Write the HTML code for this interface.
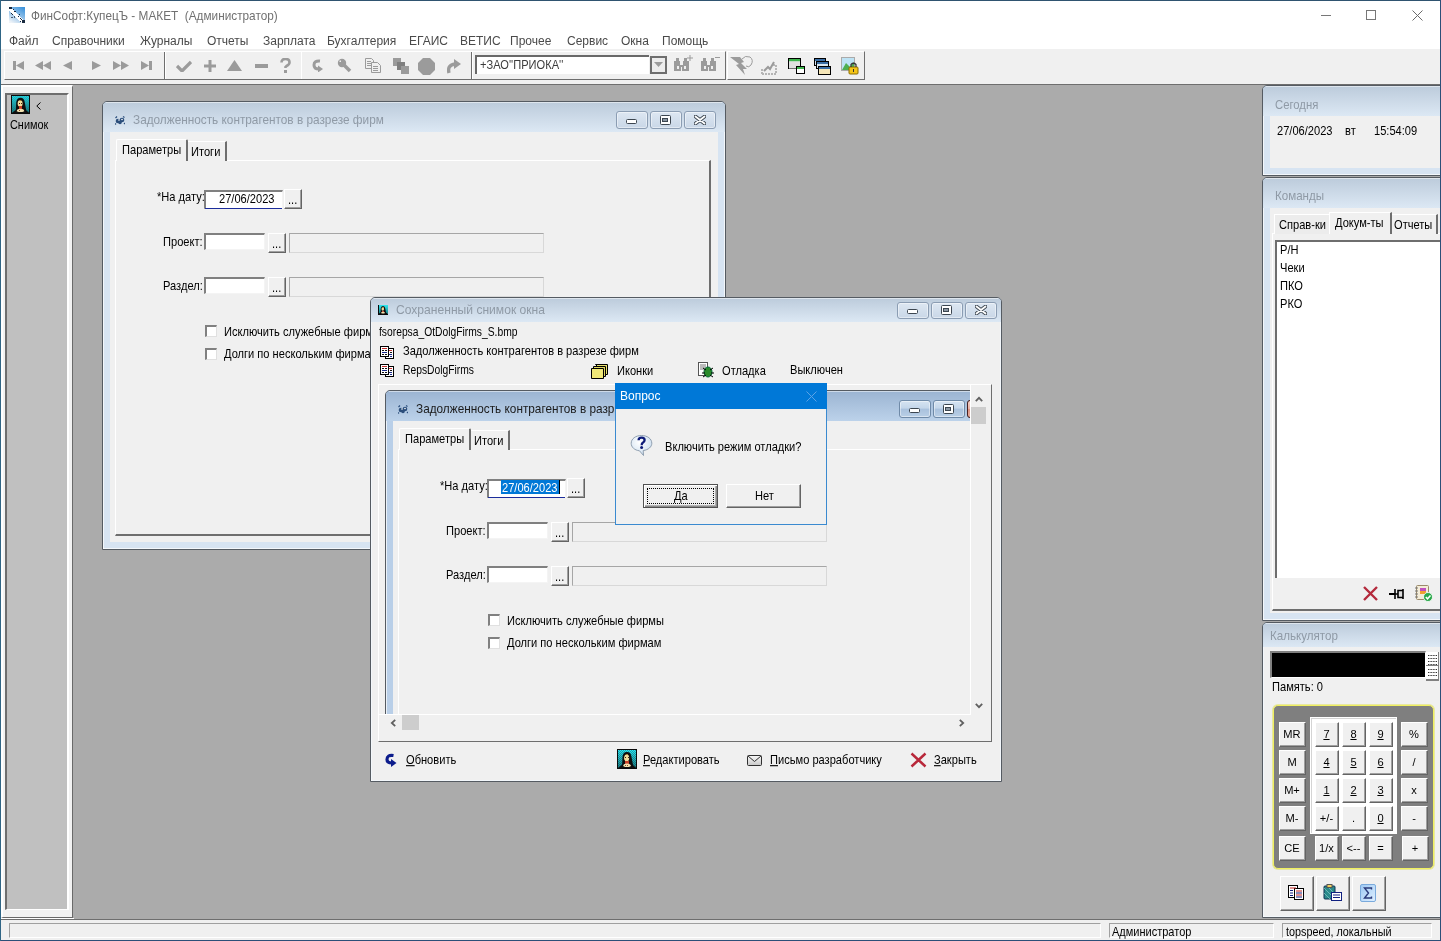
<!DOCTYPE html>
<html><head><meta charset="utf-8"><style>
html,body{margin:0;padding:0;}
body{width:1441px;height:941px;position:relative;overflow:hidden;background:#fff;font-family:"Liberation Sans", sans-serif;}
.t{position:absolute;white-space:pre;font-family:"Liberation Sans", sans-serif;will-change:transform;}
svg{display:block}
</style></head><body>
<div style="position:absolute;left:0px;top:0px;width:1441px;height:49px;background:#fff"></div><svg style="position:absolute;left:9px;top:7px;shape-rendering:crispEdges" width="16" height="16" viewBox="0 0 16 16"><defs><linearGradient id="ai" x1="0.8" y1="0" x2="0.2" y2="1"><stop offset="0" stop-color="#3f95dc"/><stop offset="0.55" stop-color="#9cc6ea"/><stop offset="1" stop-color="#eef3f8"/></linearGradient></defs>
    <rect x="0" y="0" width="16" height="16" fill="url(#ai)"/>
    <path d="M1 2 L14 15" stroke="#fff" stroke-width="3.6"/>
    <g fill="#1a2a40"><rect x="0" y="0" width="3" height="2"/><rect x="4" y="2" width="1" height="1"/><rect x="5" y="4" width="2" height="1"/><rect x="10" y="7" width="1" height="1"/><rect x="9" y="9" width="1" height="1"/><rect x="11" y="11" width="1" height="1"/><rect x="12" y="12" width="1" height="1"/><rect x="13" y="13" width="3" height="3"/><rect x="11" y="14" width="1" height="1"/><rect x="2" y="6" width="1" height="1"/><rect x="3" y="7" width="1" height="1"/><rect x="2" y="10" width="2" height="1" opacity="0.7"/><rect x="5" y="9" width="1" height="2" opacity="0.7"/></g></svg><div class="t" style="left:31px;top:11px;font-size:11.8px;line-height:11.8px;color:#707070;transform:scaleY(1.05);transform-origin:0 10px;">ФинСофт:КупецЪ - МАКЕТ  (Администратор)</div><div style="position:absolute;left:1321px;top:15px;width:10px;height:1px;background:#777"></div><div style="position:absolute;left:1366px;top:10px;width:10px;height:10px;border:1px solid #777;box-sizing:border-box"></div><svg style="position:absolute;left:1412px;top:10px;" width="11" height="11" viewBox="0 0 11 11"><path d="M0.5 0.5 L10.5 10.5 M10.5 0.5 L0.5 10.5" stroke="#6a6a6a" stroke-width="1"/></svg><div class="t" style="left:8.5px;top:35px;font-size:12px;line-height:12px;color:#4a4a4a;">Файл</div><div class="t" style="left:51.5px;top:35px;font-size:12px;line-height:12px;color:#4a4a4a;">Справочники</div><div class="t" style="left:140px;top:35px;font-size:12px;line-height:12px;color:#4a4a4a;">Журналы</div><div class="t" style="left:207.2px;top:35px;font-size:12px;line-height:12px;color:#4a4a4a;">Отчеты</div><div class="t" style="left:262.5px;top:35px;font-size:12px;line-height:12px;color:#4a4a4a;">Зарплата</div><div class="t" style="left:327px;top:35px;font-size:12px;line-height:12px;color:#4a4a4a;">Бухгалтерия</div><div class="t" style="left:409px;top:35px;font-size:12px;line-height:12px;color:#4a4a4a;">ЕГАИС</div><div class="t" style="left:460px;top:35px;font-size:12px;line-height:12px;color:#4a4a4a;">ВЕТИС</div><div class="t" style="left:510px;top:35px;font-size:12px;line-height:12px;color:#4a4a4a;">Прочее</div><div class="t" style="left:566.5px;top:35px;font-size:12px;line-height:12px;color:#4a4a4a;">Сервис</div><div class="t" style="left:620.5px;top:35px;font-size:12px;line-height:12px;color:#4a4a4a;">Окна</div><div class="t" style="left:662px;top:35px;font-size:12px;line-height:12px;color:#4a4a4a;">Помощь</div><div style="position:absolute;left:1px;top:49px;width:1439px;height:36px;background:#f0f0f0"></div><div style="position:absolute;left:4px;top:51px;width:722px;height:29px;border-top:1px solid #fff;border-left:1px solid #fff;border-right:1px solid #6e6e6e;border-bottom:1px solid #6e6e6e;box-sizing:border-box"></div><div style="position:absolute;left:164px;top:52px;width:1px;height:27px;background:#6e6e6e"></div><div style="position:absolute;left:165px;top:52px;width:1px;height:27px;background:#fff"></div><div style="position:absolute;left:301px;top:52px;width:1px;height:27px;background:#fff"></div><div style="position:absolute;left:471px;top:52px;width:1px;height:27px;background:#6e6e6e"></div><div style="position:absolute;left:472px;top:52px;width:1px;height:27px;background:#fff"></div><div style="position:absolute;left:727px;top:51px;width:138px;height:29px;border-top:1px solid #fff;border-left:1px solid #fff;border-right:1px solid #6e6e6e;border-bottom:1px solid #6e6e6e;box-sizing:border-box"></div><div style="position:absolute;left:1px;top:84px;width:1439px;height:1px;background:#6e6e6e"></div><svg style="position:absolute;left:13px;top:61px;" width="12" height="9" viewBox="0 0 12 9"><rect x="0" y="0" width="3" height="9" fill="#9b9b9b"/><path d="M11 0 L11 9 L3 4.5Z" fill="#9b9b9b"/></svg><svg style="position:absolute;left:35px;top:61px;" width="16" height="9" viewBox="0 0 16 9"><path d="M8 0 L8 9 L0 4.5Z M16 0 L16 9 L8 4.5Z" fill="#9b9b9b"/></svg><svg style="position:absolute;left:63px;top:61px;" width="10" height="9" viewBox="0 0 10 9"><path d="M9 0 L9 9 L0 4.5Z" fill="#9b9b9b"/></svg><svg style="position:absolute;left:91px;top:61px;" width="10" height="9" viewBox="0 0 10 9"><path d="M1 0 L1 9 L10 4.5Z" fill="#9b9b9b"/></svg><svg style="position:absolute;left:113px;top:61px;" width="16" height="9" viewBox="0 0 16 9"><path d="M0 0 L0 9 L8 4.5Z M8 0 L8 9 L16 4.5Z" fill="#9b9b9b"/></svg><svg style="position:absolute;left:141px;top:61px;" width="12" height="9" viewBox="0 0 12 9"><path d="M0 0 L0 9 L8 4.5Z" fill="#9b9b9b"/><rect x="8" y="0" width="3" height="9" fill="#9b9b9b"/></svg><svg style="position:absolute;left:176px;top:60px;" width="16" height="12" viewBox="0 0 16 12"><path d="M1 6 L6 11 L15 2" stroke="#9b9b9b" stroke-width="3.2" fill="none"/></svg><svg style="position:absolute;left:204px;top:60px;" width="12" height="12" viewBox="0 0 12 12"><rect x="4.5" y="0" width="3" height="12" fill="#9b9b9b"/><rect x="0" y="4.5" width="12" height="3" fill="#9b9b9b"/></svg><svg style="position:absolute;left:227px;top:60px;" width="15" height="11" viewBox="0 0 15 11"><path d="M7.5 0 L15 11 L0 11Z" fill="#9b9b9b"/></svg><svg style="position:absolute;left:255px;top:64px;" width="13" height="4" viewBox="0 0 13 4"><rect x="0" y="0" width="13" height="4" fill="#9b9b9b"/></svg><svg style="position:absolute;left:280px;top:58px;" width="11" height="15" viewBox="0 0 11 15"><path d="M1.5 4.5 Q1.5 1 5.5 1 Q9.5 1 9.5 4.5 Q9.5 6.5 6.5 8 L5.5 9 L5.5 10" stroke="#9b9b9b" stroke-width="2.6" fill="none"/><rect x="4" y="12" width="3" height="3" fill="#9b9b9b"/></svg><svg style="position:absolute;left:312px;top:59px;" width="13" height="13" viewBox="0 0 13 13"><path d="M8 2 Q2 1.5 2 6 Q2 10 7 10" stroke="#9b9b9b" stroke-width="3" fill="none"/><path d="M6 6.5 L11 10 L6 13.5Z" fill="#9b9b9b"/></svg><svg style="position:absolute;left:337px;top:58px;" width="15" height="15" viewBox="0 0 15 15"><circle cx="5" cy="5" r="4.2" fill="#9b9b9b"/><path d="M6 6 L13 13" stroke="#9b9b9b" stroke-width="3.5"/><rect x="2.5" y="2.5" width="1.5" height="1.5" fill="#f0f0f0"/></svg><svg style="position:absolute;left:365px;top:58px;" width="16" height="15" viewBox="0 0 16 15"><path d="M0.5 0.5 H6.5 L8.5 2.5 V10.5 H0.5Z" fill="#f0f0f0" stroke="#9b9b9b"/><path d="M6.5 4.5 H12.5 L15.5 7.5 V14.5 H6.5Z" fill="#f0f0f0" stroke="#9b9b9b"/><path d="M2 3.5H6 M2 5.5H6 M2 7.5H6 M8 8.5H13 M8 10.5H13 M8 12.5H13" stroke="#9b9b9b"/></svg><svg style="position:absolute;left:393px;top:58px;" width="16" height="16" viewBox="0 0 16 16"><rect x="0" y="0" width="8" height="8" fill="#9b9b9b"/><rect x="4" y="4" width="8" height="8" fill="#7f7f7f"/><rect x="8" y="8" width="8" height="8" fill="#9b9b9b"/></svg><svg style="position:absolute;left:418px;top:58px;" width="17" height="17" viewBox="0 0 17 17"><path d="M5 0 H12 L17 5 V12 L12 17 H5 L0 12 V5Z" fill="#9b9b9b"/></svg><svg style="position:absolute;left:447px;top:58px;" width="15" height="16" viewBox="0 0 15 16"><path d="M2 15 Q0 7 8 6" stroke="#9b9b9b" stroke-width="3.4" fill="none"/><path d="M7 1 L14 6 L7 11Z" fill="#9b9b9b"/></svg><div style="position:absolute;left:475px;top:55px;width:174px;height:19px;background:#fff;border-top:2px solid #696969;border-left:2px solid #696969;box-sizing:border-box"></div><div class="t" style="left:480px;top:60px;font-size:11.1px;line-height:11.1px;color:#3c3c3c;transform:scaleY(1.12);transform-origin:0 9px;">+ЗАО''ПРИОКА''</div><div style="position:absolute;left:650px;top:56px;width:17px;height:18px;background:#ececec;border:2px solid #6e6e6e;box-sizing:border-box"></div><svg style="position:absolute;left:654px;top:62px;" width="9" height="5" viewBox="0 0 9 5"><path d="M0 0 H9 L4.5 5Z" fill="#9b9b9b"/></svg><svg style="position:absolute;left:674px;top:58px;" width="19" height="14" viewBox="0 0 19 14"><path d="M2 0 H5 V3 H6 V7 H9 V3 H10 V0 H13 V3 H15 V13 H8 V9 H7 V13 H0 V3 H2Z" fill="#9b9b9b"/><rect x="3" y="8" width="2" height="3" fill="#f0f0f0"/><rect x="10" y="8" width="2" height="3" fill="#f0f0f0"/></svg><svg style="position:absolute;left:687px;top:55px;" width="6" height="6" viewBox="0 0 6 6"><path d="M3 0 V6 M0 3 H6" stroke="#9b9b9b"/></svg><svg style="position:absolute;left:701px;top:58px;" width="16" height="14" viewBox="0 0 16 14"><path d="M2 0 H5 V3 H6 V7 H9 V3 H10 V0 H13 V3 H15 V13 H8 V9 H7 V13 H0 V3 H2Z" fill="#9b9b9b"/><rect x="3" y="8" width="2" height="3" fill="#f0f0f0"/><rect x="10" y="8" width="2" height="3" fill="#f0f0f0"/></svg><div style="position:absolute;left:715px;top:57px;width:5px;height:1px;background:#9b9b9b"></div><svg style="position:absolute;left:730px;top:56px;" width="24" height="20" viewBox="0 0 24 20"><path d="M0 1 H10 L14 6 L11 7 L17 13 L13 13 L15 19 L6 9 L9 8Z" fill="#9b9b9b"/><path d="M12 3 Q15 -1 20 1 Q24 4 21 9 Q19 12 16 10" stroke="#9b9b9b" fill="none"/></svg><svg style="position:absolute;left:761px;top:59px;" width="16" height="16" viewBox="0 0 16 16"><path d="M1 15 H15 V6 H12 M1 15 V9" stroke="#b5b5b5" stroke-width="2" fill="none" stroke-dasharray="2 1"/><path d="M3 12 L7 8 L9 10 L13 3" stroke="#9b9b9b" stroke-width="2" fill="none"/></svg><svg style="position:absolute;left:788px;top:58px;" width="17" height="16" viewBox="0 0 17 16"><rect x="0.5" y="0.5" width="12" height="10" fill="#fff" stroke="#000"/><rect x="1" y="1" width="11" height="2.5" fill="#3cb44b"/><rect x="1" y="3.5" width="11" height="7" fill="#e0e0e0"/><rect x="8.5" y="8.5" width="8" height="7" fill="#fff" stroke="#000"/><rect x="9" y="9" width="7" height="2" fill="#3cb44b"/></svg><svg style="position:absolute;left:814px;top:58px;" width="17" height="17" viewBox="0 0 17 17"><rect x="0.5" y="0.5" width="11" height="7" fill="#cfe0ef" stroke="#000"/><rect x="1" y="1" width="10" height="2" fill="#3a6ea5"/><rect x="2.5" y="3.5" width="12" height="7" fill="#d8e6f0" stroke="#000"/><rect x="3" y="4" width="11" height="2" fill="#3a6ea5"/><rect x="4.5" y="8.5" width="12" height="8" fill="#f5e6b8" stroke="#000"/><rect x="5" y="9" width="11" height="2" fill="#3a6ea5"/></svg><svg style="position:absolute;left:841px;top:57px;" width="18" height="18" viewBox="0 0 18 18"><rect x="0.5" y="0.5" width="13" height="13" fill="#bde3f5" stroke="#aaa"/><path d="M1 13 L5 6 L9 10 L13 5 V13Z" fill="#4caf50"/><rect x="8" y="10" width="9" height="7" rx="1" fill="#f5c518" stroke="#8a6d00"/><path d="M10 10 V7.5 Q12.5 5 15 7.5 V10" stroke="#333" fill="none" stroke-width="1.2"/><rect x="12" y="12" width="1" height="3" fill="#333"/></svg><div style="position:absolute;left:1px;top:85px;width:1439px;height:834px;background:#ababab"></div><div style="position:absolute;left:1px;top:919px;width:1439px;height:1px;background:#6e6e6e"></div><div style="position:absolute;left:1px;top:920px;width:1439px;height:20px;background:#f0f0f0"></div><div style="position:absolute;left:9px;top:923px;width:1092px;height:15px;border-top:1px solid #a0a0a0;border-left:1px solid #a0a0a0;border-right:1px solid #fff;border-bottom:1px solid #fff;box-sizing:border-box"></div><div style="position:absolute;left:1109px;top:923px;width:165px;height:15px;border-top:1px solid #a0a0a0;border-left:1px solid #a0a0a0;border-right:1px solid #fff;border-bottom:1px solid #fff;box-sizing:border-box"></div><div style="position:absolute;left:1282px;top:923px;width:150px;height:15px;border-top:1px solid #a0a0a0;border-left:1px solid #a0a0a0;border-right:1px solid #fff;border-bottom:1px solid #fff;box-sizing:border-box"></div><div class="t" style="left:1112px;top:927px;font-size:11px;line-height:11px;color:#000;transform:scaleY(1.12);transform-origin:0 9px;">Администратор</div><div class="t" style="left:1286px;top:927px;font-size:10.8px;line-height:10.8px;color:#000;transform:scaleY(1.15);transform-origin:0 9px;">topspeed, локальный</div><div style="position:absolute;left:1px;top:85px;width:72px;height:833px;background:#f2f2f2;border-top:2px solid #fff;border-left:2px solid #fff;border-right:1px solid #696969;border-bottom:1px solid #696969;box-sizing:border-box"></div><div style="position:absolute;left:1px;top:918px;width:73px;height:1px;background:#fff"></div><div style="position:absolute;left:5px;top:93px;width:64px;height:817px;background:#c0c0c0;border-top:2px solid #6e6e6e;border-left:2px solid #6e6e6e;border-right:2px solid #fff;border-bottom:1px solid #fff;box-sizing:border-box"></div><svg style="position:absolute;left:11px;top:95px" width="19" height="19" viewBox="0 0 20 20" shape-rendering="crispEdges">
<defs><pattern id="chk1" width="2" height="2" patternUnits="userSpaceOnUse"><rect width="2" height="2" fill="#1aa8b8"/><rect width="1" height="1" fill="#30e8f0"/><rect x="1" y="1" width="1" height="1" fill="#30e8f0"/></pattern>
<linearGradient id="chk1g" x1="0" y1="0" x2="0" y2="1"><stop offset="0" stop-color="#000" stop-opacity="0"/><stop offset="1" stop-color="#000" stop-opacity="0.45"/></linearGradient></defs>
<rect x="0" y="0" width="20" height="20" fill="#0a0a0a"/>
<rect x="1" y="1" width="18" height="18" fill="url(#chk1)"/>
<rect x="1" y="1" width="18" height="18" fill="url(#chk1g)"/>
<path d="M5 19 L5.5 8 Q6 3 10 3 Q14 3 14.5 8 L16 16 L19 19Z" fill="#0e0e0e" shape-rendering="auto"/>
<path d="M1 19 L6 15 L14 15 L19 19Z" fill="#0e0e0e" shape-rendering="auto"/>
<ellipse cx="9.6" cy="9" rx="2.6" ry="3.4" fill="#f2dc9a" shape-rendering="auto"/>
<rect x="8" y="8" width="1" height="1" fill="#402010"/><rect x="11" y="8" width="1" height="1" fill="#402010"/>
<rect x="9" y="5" width="2" height="1" fill="#b08030"/>
<rect x="8" y="12" width="4" height="3" fill="#c84028"/>
<path d="M6 17 Q6.5 14.5 10 14.5 Q13.5 14.5 14 17 L12 18 L8 18Z" fill="#f2e2b0" shape-rendering="auto"/>
<rect x="8" y="16" width="1" height="1" fill="#8a5020"/><rect x="10" y="16" width="1" height="1" fill="#8a5020"/>
</svg><svg style="position:absolute;left:36px;top:102px;" width="5" height="8" viewBox="0 0 5 8"><path d="M4.5 0.5 L0.8 4 L4.5 7.5" stroke="#000" fill="none"/></svg><div class="t" style="left:10px;top:120px;font-size:10.9px;line-height:10.9px;color:#000;transform:scaleY(1.12);transform-origin:0 9px;">Снимок</div><div style="position:absolute;left:102px;top:101px;width:624px;height:449px;background:#d7e4f2;border:1px solid #555b62;border-radius:5px 5px 0 0;box-sizing:border-box;overflow:hidden"></div><div style="position:absolute;left:103px;top:102px;width:622px;height:30px;background:linear-gradient(#bccbdb,#dce8f4);border-radius:4px 4px 0 0"></div><div style="position:absolute;left:103px;top:132px;width:1px;height:417px;background:rgba(255,255,255,0.7)"></div><div style="position:absolute;left:724px;top:132px;width:1px;height:417px;background:rgba(255,255,255,0.7)"></div><div style="position:absolute;left:103px;top:548px;width:622px;height:1px;background:rgba(255,255,255,0.7)"></div><div style="position:absolute;left:106px;top:102px;width:616px;height:1px;background:rgba(255,255,255,0.5)"></div><div style="position:absolute;left:110px;top:132px;width:608px;height:410px;background:#f0f0f0"></div><svg style="position:absolute;left:115px;top:116px;" width="10" height="9" viewBox="0 0 10 9"><g fill="#2c4f7c"><circle cx="3" cy="5" r="2.3"/><circle cx="7" cy="4" r="2.3"/><circle cx="5" cy="6.5" r="1.8"/><path d="M0.5 2 L2 0.5 M8 0.5 L9.5 1.5 M9 8 L10 7 M1 8.5 L0 7.5" stroke="#2c4f7c" stroke-width="1.2"/></g><circle cx="4" cy="4" r="0.8" fill="#fff"/><circle cx="7" cy="3.5" r="0.8" fill="#fff"/></svg><div class="t" style="left:133px;top:115px;font-size:11.8px;line-height:11.8px;color:#8f9aa6;transform:scaleY(1.1);transform-origin:0 10px;">Задолженность контрагентов в разрезе фирм</div><div style="position:absolute;left:616px;top:111px;width:32px;height:18px;background:linear-gradient(#dde7f2,#c9d7e7);border:1px solid #8b9db3;border-radius:3px;box-sizing:border-box;box-shadow:inset 0 0 0 1px rgba(255,255,255,0.45)"></div><div style="position:absolute;left:626px;top:119px;width:11px;height:5px;background:#fff;border:1px solid #3c4650;border-radius:1.5px;box-sizing:border-box"></div><div style="position:absolute;left:650px;top:111px;width:32px;height:18px;background:linear-gradient(#dde7f2,#c9d7e7);border:1px solid #8b9db3;border-radius:3px;box-sizing:border-box;box-shadow:inset 0 0 0 1px rgba(255,255,255,0.45)"></div><div style="position:absolute;left:660px;top:115px;width:11px;height:10px;background:#fff;border:1px solid #3c4650;border-radius:1.5px;box-sizing:border-box"></div><div style="position:absolute;left:662px;top:118px;width:6px;height:4px;background:#8a96a2;border:1px solid #3c4650;box-sizing:border-box"></div><div style="position:absolute;left:684px;top:111px;width:32px;height:18px;background:linear-gradient(#dde7f2,#c9d7e7);border:1px solid #8b9db3;border-radius:3px;box-sizing:border-box;box-shadow:inset 0 0 0 1px rgba(255,255,255,0.45)"></div><svg style="position:absolute;left:694px;top:115px;" width="12" height="10" viewBox="0 0 12 10"><path d="M1.5 1.5 L10.5 8.5 M10.5 1.5 L1.5 8.5" stroke="#3c4650" stroke-width="3.6" stroke-linecap="round"/><path d="M1.5 1.5 L10.5 8.5 M10.5 1.5 L1.5 8.5" stroke="#fff" stroke-width="1.8" stroke-linecap="round"/></svg><div style="position:absolute;left:115px;top:160px;width:596px;height:376px;border-top:1px solid #fff;border-left:1px solid #fff;border-right:2px solid #6e6e6e;border-bottom:2px solid #6e6e6e;box-sizing:border-box"></div><div style="position:absolute;left:116px;top:139px;width:72px;height:22px;background:#f0f0f0;border-top:1px solid #fff;border-left:1px solid #fff;border-right:2px solid #6e6e6e;box-sizing:border-box;border-radius:2px 2px 0 0"></div><div style="position:absolute;left:188px;top:141px;width:39px;height:20px;background:#f0f0f0;border-top:1px solid #fff;border-right:2px solid #6e6e6e;box-sizing:border-box"></div><div class="t" style="left:122px;top:145px;font-size:11.1px;line-height:11.1px;color:#000;transform:scaleY(1.12);transform-origin:0 9px;">Параметры</div><div class="t" style="left:190.5px;top:147px;font-size:11.1px;line-height:11.1px;color:#000;transform:scaleY(1.12);transform-origin:0 9px;">Итоги</div><div class="t" style="left:157px;top:192px;font-size:11.1px;line-height:11.1px;color:#000;transform:scaleY(1.12);transform-origin:0 9px;">*На дату:</div><div class="t" style="left:162.5px;top:237px;font-size:11.1px;line-height:11.1px;color:#000;transform:scaleY(1.12);transform-origin:0 9px;">Проект:</div><div class="t" style="left:162.5px;top:281px;font-size:11.1px;line-height:11.1px;color:#000;transform:scaleY(1.12);transform-origin:0 9px;">Раздел:</div><div style="position:absolute;left:204px;top:190px;width:79px;height:19px;background:#fff;border-top:2px solid #808080;border-left:2px solid #808080;border-right:1px solid #f4f4f4;border-bottom:1px solid #f4f4f4;box-sizing:border-box"></div><div style="position:absolute;left:205px;top:208px;width:77px;height:1px;background:#1c2d9c"></div><div class="t" style="left:219px;top:194px;font-size:11.1px;line-height:11.1px;color:#000;transform:scaleY(1.12);transform-origin:0 9px;">27/06/2023</div><div style="position:absolute;left:284px;top:189px;width:18px;height:20px;background:#f0f0f0;border-top:1px solid #fff;border-left:1px solid #fff;border-right:1px solid #646464;border-bottom:1px solid #646464;box-sizing:border-box;box-shadow:inset -1px -1px 0 #a0a0a0"></div><div class="t" style="left:288px;top:195px;font-size:11.1px;line-height:11.1px;color:#000;transform:scaleY(1.12);transform-origin:0 9px;">...</div><div style="position:absolute;left:204px;top:233px;width:61px;height:17px;background:#fff;border-top:2px solid #808080;border-left:2px solid #808080;border-right:1px solid #f4f4f4;border-bottom:1px solid #f4f4f4;box-sizing:border-box"></div><div style="position:absolute;left:268px;top:233px;width:18px;height:20px;background:#f0f0f0;border-top:1px solid #fff;border-left:1px solid #fff;border-right:1px solid #646464;border-bottom:1px solid #646464;box-sizing:border-box;box-shadow:inset -1px -1px 0 #a0a0a0"></div><div class="t" style="left:272px;top:239px;font-size:11.1px;line-height:11.1px;color:#000;transform:scaleY(1.12);transform-origin:0 9px;">...</div><div style="position:absolute;left:289px;top:233px;width:255px;height:20px;border:1px solid #a6a6a6;border-right-color:#d8d8d8;border-bottom-color:#d8d8d8;box-sizing:border-box"></div><div style="position:absolute;left:204px;top:277px;width:61px;height:17px;background:#fff;border-top:2px solid #808080;border-left:2px solid #808080;border-right:1px solid #f4f4f4;border-bottom:1px solid #f4f4f4;box-sizing:border-box"></div><div style="position:absolute;left:268px;top:277px;width:18px;height:20px;background:#f0f0f0;border-top:1px solid #fff;border-left:1px solid #fff;border-right:1px solid #646464;border-bottom:1px solid #646464;box-sizing:border-box;box-shadow:inset -1px -1px 0 #a0a0a0"></div><div class="t" style="left:272px;top:283px;font-size:11.1px;line-height:11.1px;color:#000;transform:scaleY(1.12);transform-origin:0 9px;">...</div><div style="position:absolute;left:289px;top:277px;width:255px;height:20px;border:1px solid #a6a6a6;border-right-color:#d8d8d8;border-bottom-color:#d8d8d8;box-sizing:border-box"></div><div style="position:absolute;left:205px;top:325px;width:12px;height:12px;background:#fff;border-top:2px solid #808080;border-left:2px solid #808080;border-right:1px solid #e0e0e0;border-bottom:1px solid #e0e0e0;box-sizing:border-box"></div><div class="t" style="left:223.5px;top:327px;font-size:11.1px;line-height:11.1px;color:#000;transform:scaleY(1.12);transform-origin:0 9px;">Исключить служебные фирмы</div><div style="position:absolute;left:205px;top:348px;width:12px;height:12px;background:#fff;border-top:2px solid #808080;border-left:2px solid #808080;border-right:1px solid #e0e0e0;border-bottom:1px solid #e0e0e0;box-sizing:border-box"></div><div class="t" style="left:223.5px;top:349px;font-size:11.1px;line-height:11.1px;color:#000;transform:scaleY(1.12);transform-origin:0 9px;">Долги по нескольким фирмам</div><div style="position:absolute;left:370px;top:297px;width:632px;height:485px;background:#d7e4f2;border:1px solid #555b62;border-radius:5px 5px 0 0;box-sizing:border-box;overflow:hidden"></div><div style="position:absolute;left:371px;top:298px;width:630px;height:24px;background:linear-gradient(#bccbdb,#dce8f4);border-radius:4px 4px 0 0"></div><div style="position:absolute;left:371px;top:322px;width:1px;height:459px;background:rgba(255,255,255,0.7)"></div><div style="position:absolute;left:1000px;top:322px;width:1px;height:459px;background:rgba(255,255,255,0.7)"></div><div style="position:absolute;left:371px;top:780px;width:630px;height:1px;background:rgba(255,255,255,0.7)"></div><div style="position:absolute;left:374px;top:298px;width:624px;height:1px;background:rgba(255,255,255,0.5)"></div><div style="position:absolute;left:372px;top:322px;width:628px;height:458px;background:#f0f0f0"></div><div class="t" style="left:396px;top:304px;font-size:12.1px;line-height:12.1px;color:#8f9aa6;transform:scaleY(1.1);transform-origin:0 10px;">Сохраненный снимок окна</div><div style="position:absolute;left:897px;top:302px;width:32px;height:17px;background:linear-gradient(#dde7f2,#c9d7e7);border:1px solid #8b9db3;border-radius:3px;box-sizing:border-box;box-shadow:inset 0 0 0 1px rgba(255,255,255,0.45)"></div><div style="position:absolute;left:907px;top:309px;width:11px;height:5px;background:#fff;border:1px solid #3c4650;border-radius:1.5px;box-sizing:border-box"></div><div style="position:absolute;left:931px;top:302px;width:32px;height:17px;background:linear-gradient(#dde7f2,#c9d7e7);border:1px solid #8b9db3;border-radius:3px;box-sizing:border-box;box-shadow:inset 0 0 0 1px rgba(255,255,255,0.45)"></div><div style="position:absolute;left:941px;top:305px;width:11px;height:10px;background:#fff;border:1px solid #3c4650;border-radius:1.5px;box-sizing:border-box"></div><div style="position:absolute;left:943px;top:308px;width:6px;height:4px;background:#8a96a2;border:1px solid #3c4650;box-sizing:border-box"></div><div style="position:absolute;left:965px;top:302px;width:32px;height:17px;background:linear-gradient(#dde7f2,#c9d7e7);border:1px solid #8b9db3;border-radius:3px;box-sizing:border-box;box-shadow:inset 0 0 0 1px rgba(255,255,255,0.45)"></div><svg style="position:absolute;left:975px;top:305px;" width="12" height="10" viewBox="0 0 12 10"><path d="M1.5 1.5 L10.5 8.5 M10.5 1.5 L1.5 8.5" stroke="#3c4650" stroke-width="3.6" stroke-linecap="round"/><path d="M1.5 1.5 L10.5 8.5 M10.5 1.5 L1.5 8.5" stroke="#fff" stroke-width="1.8" stroke-linecap="round"/></svg><svg style="position:absolute;left:378px;top:304px" width="10" height="11" viewBox="0 0 20 20" shape-rendering="crispEdges">
<defs><pattern id="chk2" width="2" height="2" patternUnits="userSpaceOnUse"><rect width="2" height="2" fill="#1aa8b8"/><rect width="1" height="1" fill="#30e8f0"/><rect x="1" y="1" width="1" height="1" fill="#30e8f0"/></pattern>
<linearGradient id="chk2g" x1="0" y1="0" x2="0" y2="1"><stop offset="0" stop-color="#000" stop-opacity="0"/><stop offset="1" stop-color="#000" stop-opacity="0.45"/></linearGradient></defs>
<rect x="0" y="0" width="20" height="20" fill="#0a0a0a"/>
<rect x="1" y="1" width="18" height="18" fill="url(#chk2)"/>
<rect x="1" y="1" width="18" height="18" fill="url(#chk2g)"/>
<path d="M5 19 L5.5 8 Q6 3 10 3 Q14 3 14.5 8 L16 16 L19 19Z" fill="#0e0e0e" shape-rendering="auto"/>
<path d="M1 19 L6 15 L14 15 L19 19Z" fill="#0e0e0e" shape-rendering="auto"/>
<ellipse cx="9.6" cy="9" rx="2.6" ry="3.4" fill="#f2dc9a" shape-rendering="auto"/>
<rect x="8" y="8" width="1" height="1" fill="#402010"/><rect x="11" y="8" width="1" height="1" fill="#402010"/>
<rect x="9" y="5" width="2" height="1" fill="#b08030"/>
<rect x="8" y="12" width="4" height="3" fill="#c84028"/>
<path d="M6 17 Q6.5 14.5 10 14.5 Q13.5 14.5 14 17 L12 18 L8 18Z" fill="#f2e2b0" shape-rendering="auto"/>
<rect x="8" y="16" width="1" height="1" fill="#8a5020"/><rect x="10" y="16" width="1" height="1" fill="#8a5020"/>
</svg><div class="t" style="left:379px;top:328px;font-size:10.3px;line-height:10.3px;color:#000;transform:scaleY(1.2);transform-origin:0 8px;">fsorepsa_OtDolgFirms_S.bmp</div><svg style="position:absolute;left:380px;top:346px;" width="14" height="13" viewBox="0 0 14 13"><g shape-rendering="crispEdges"><rect x="5.5" y="2.5" width="8" height="10" fill="#fff" stroke="#000"/><path d="M9 4.5H12" stroke="#c83030"/><path d="M10 6.5H12" stroke="#101010"/><path d="M9 8.5H12" stroke="#1a2a8a"/><path d="M10 10.5H12" stroke="#1a2a8a"/><rect x="0.5" y="0.5" width="8" height="10" fill="#fff" stroke="#000"/><path d="M2 2.5H7" stroke="#c83030"/><path d="M2 4.5H3.5 M5 4.5H7" stroke="#101010"/><path d="M2 6.5H7" stroke="#1a2a8a"/><path d="M2 8.5H3.5 M5 8.5H7" stroke="#101010"/></g></svg><div class="t" style="left:403px;top:346px;font-size:11.1px;line-height:11.1px;color:#000;transform:scaleY(1.12);transform-origin:0 9px;">Задолженность контрагентов в разрезе фирм</div><svg style="position:absolute;left:380px;top:364px;" width="14" height="13" viewBox="0 0 14 13"><g shape-rendering="crispEdges"><rect x="5.5" y="2.5" width="8" height="10" fill="#fff" stroke="#000"/><path d="M9 4.5H12" stroke="#c83030"/><path d="M10 6.5H12" stroke="#101010"/><path d="M9 8.5H12" stroke="#1a2a8a"/><path d="M10 10.5H12" stroke="#1a2a8a"/><rect x="0.5" y="0.5" width="8" height="10" fill="#fff" stroke="#000"/><path d="M2 2.5H7" stroke="#c83030"/><path d="M2 4.5H3.5 M5 4.5H7" stroke="#101010"/><path d="M2 6.5H7" stroke="#1a2a8a"/><path d="M2 8.5H3.5 M5 8.5H7" stroke="#101010"/></g></svg><div class="t" style="left:403px;top:366px;font-size:10.3px;line-height:10.3px;color:#000;transform:scaleY(1.2);transform-origin:0 8px;">RepsDolgFirms</div><svg style="position:absolute;left:591px;top:364px;" width="18" height="15" viewBox="0 0 18 15"><path d="M4.5 0.5 H16.5 V10.5 H14.5Z" fill="#e8e070" stroke="#000"/><path d="M2.5 2.5 H14.5 V12.5 H2.5Z" fill="#e0d860" stroke="#000"/><path d="M0.5 4.5 H12.5 V14.5 H0.5Z" fill="#f0e878" stroke="#000"/></svg><div class="t" style="left:616.5px;top:366px;font-size:11.1px;line-height:11.1px;color:#000;transform:scaleY(1.12);transform-origin:0 9px;">Иконки</div><svg style="position:absolute;left:698px;top:362px;" width="18" height="16" viewBox="0 0 18 16"><rect x="0.5" y="0.5" width="9" height="13" fill="#fff" stroke="#555"/><path d="M2 3H8 M2 5H8 M2 7H6" stroke="#777"/><ellipse cx="10" cy="10" rx="4" ry="5" fill="#2a8a2a" stroke="#063"/><path d="M5 6 L8 8 M15 6 L12 8 M4 11 H7 M13 11 H16 M5 15 L8 13 M15 15 L12 13" stroke="#000"/></svg><div class="t" style="left:721.5px;top:366px;font-size:11.1px;line-height:11.1px;color:#000;transform:scaleY(1.12);transform-origin:0 9px;">Отладка</div><div class="t" style="left:789.5px;top:365px;font-size:11.1px;line-height:11.1px;color:#000;transform:scaleY(1.12);transform-origin:0 9px;">Выключен</div><div style="position:absolute;left:378px;top:384px;width:614px;height:358px;border-top:1px solid #fff;border-left:1px solid #fff;border-right:1px solid #6e6e6e;border-bottom:1px solid #6e6e6e;box-sizing:border-box"></div><svg style="position:absolute;left:975px;top:396px;" width="8" height="6" viewBox="0 0 8 6"><path d="M0.8 5.2 L4 1.8 L7.2 5.2" stroke="#606060" stroke-width="1.8" fill="none"/></svg><div style="position:absolute;left:971px;top:407px;width:15px;height:17px;background:#cdcdcd"></div><svg style="position:absolute;left:975px;top:703px;" width="8" height="6" viewBox="0 0 8 6"><path d="M0.8 0.8 L4 4.2 L7.2 0.8" stroke="#606060" stroke-width="1.8" fill="none"/></svg><svg style="position:absolute;left:390px;top:719px;" width="6" height="8" viewBox="0 0 6 8"><path d="M5.2 0.8 L1.8 4 L5.2 7.2" stroke="#606060" stroke-width="1.8" fill="none"/></svg><div style="position:absolute;left:402px;top:715px;width:17px;height:15px;background:#cdcdcd"></div><svg style="position:absolute;left:959px;top:719px;" width="6" height="8" viewBox="0 0 6 8"><path d="M0.8 0.8 L4.2 4 L0.8 7.2" stroke="#606060" stroke-width="1.8" fill="none"/></svg><div style="position:absolute;left:379px;top:385px;width:591px;height:329px;overflow:hidden;border-right:1px solid #fff;border-bottom:1px solid #fff"><div style="position:absolute;left:6px;top:5px;width:624px;height:449px;background:#b9cfe8;border:1px solid #555b62;border-radius:5px 5px 0 0;box-sizing:border-box;overflow:hidden"></div><div style="position:absolute;left:7px;top:6px;width:622px;height:30px;background:linear-gradient(#9bb4d2,#bcd2ea);border-radius:4px 4px 0 0"></div><div style="position:absolute;left:7px;top:36px;width:1px;height:417px;background:rgba(255,255,255,0.7)"></div><div style="position:absolute;left:628px;top:36px;width:1px;height:417px;background:rgba(255,255,255,0.7)"></div><div style="position:absolute;left:7px;top:452px;width:622px;height:1px;background:rgba(255,255,255,0.7)"></div><div style="position:absolute;left:10px;top:6px;width:616px;height:1px;background:rgba(255,255,255,0.5)"></div><div style="position:absolute;left:14px;top:36px;width:608px;height:410px;background:#f0f0f0"></div><svg style="position:absolute;left:19px;top:20px;" width="10" height="9" viewBox="0 0 10 9"><g fill="#2c4f7c"><circle cx="3" cy="5" r="2.3"/><circle cx="7" cy="4" r="2.3"/><circle cx="5" cy="6.5" r="1.8"/><path d="M0.5 2 L2 0.5 M8 0.5 L9.5 1.5 M9 8 L10 7 M1 8.5 L0 7.5" stroke="#2c4f7c" stroke-width="1.2"/></g><circle cx="4" cy="4" r="0.8" fill="#fff"/><circle cx="7" cy="3.5" r="0.8" fill="#fff"/></svg><div class="t" style="left:37px;top:19px;font-size:11.8px;line-height:11.8px;color:#1b1b1b;transform:scaleY(1.1);transform-origin:0 10px;">Задолженность контрагентов в разрезе фирм</div><div style="position:absolute;left:520px;top:15px;width:32px;height:18px;background:linear-gradient(#d6e3f1 0%,#c4d6ea 45%,#a9c1dd 50%,#b9cfe6 100%);border:1px solid #6f8aa8;border-radius:3px;box-sizing:border-box;box-shadow:inset 0 0 0 1px rgba(255,255,255,0.45)"></div><div style="position:absolute;left:530px;top:23px;width:11px;height:5px;background:#fff;border:1px solid #3c4650;border-radius:1.5px;box-sizing:border-box"></div><div style="position:absolute;left:554px;top:15px;width:32px;height:18px;background:linear-gradient(#d6e3f1 0%,#c4d6ea 45%,#a9c1dd 50%,#b9cfe6 100%);border:1px solid #6f8aa8;border-radius:3px;box-sizing:border-box;box-shadow:inset 0 0 0 1px rgba(255,255,255,0.45)"></div><div style="position:absolute;left:564px;top:19px;width:11px;height:10px;background:#fff;border:1px solid #3c4650;border-radius:1.5px;box-sizing:border-box"></div><div style="position:absolute;left:566px;top:22px;width:6px;height:4px;background:#8a96a2;border:1px solid #3c4650;box-sizing:border-box"></div><div style="position:absolute;left:588px;top:15px;width:32px;height:18px;background:linear-gradient(#d6e3f1 0%,#c4d6ea 45%,#a9c1dd 50%,#b9cfe6 100%);border:1px solid #6f8aa8;border-radius:3px;box-sizing:border-box;box-shadow:inset 0 0 0 1px rgba(255,255,255,0.45)"></div><div style="position:absolute;left:588px;top:15px;width:32px;height:18px;background:linear-gradient(#f4d0c8 0%,#e8b0a4 50%,#dc9080 51%,#e8b0a0 100%);border:1px solid #4a2020;border-radius:3px;box-sizing:border-box"></div><div style="position:absolute;left:19px;top:64px;width:596px;height:376px;border-top:1px solid #fff;border-left:1px solid #fff;border-right:2px solid #6e6e6e;border-bottom:2px solid #6e6e6e;box-sizing:border-box"></div><div style="position:absolute;left:20px;top:43px;width:72px;height:22px;background:#f0f0f0;border-top:1px solid #fff;border-left:1px solid #fff;border-right:2px solid #6e6e6e;box-sizing:border-box;border-radius:2px 2px 0 0"></div><div style="position:absolute;left:92px;top:45px;width:39px;height:20px;background:#f0f0f0;border-top:1px solid #fff;border-right:2px solid #6e6e6e;box-sizing:border-box"></div><div class="t" style="left:26px;top:49px;font-size:11.1px;line-height:11.1px;color:#000;transform:scaleY(1.12);transform-origin:0 9px;">Параметры</div><div class="t" style="left:94.5px;top:51px;font-size:11.1px;line-height:11.1px;color:#000;transform:scaleY(1.12);transform-origin:0 9px;">Итоги</div><div class="t" style="left:61px;top:96px;font-size:11.1px;line-height:11.1px;color:#000;transform:scaleY(1.12);transform-origin:0 9px;">*На дату:</div><div class="t" style="left:66.5px;top:141px;font-size:11.1px;line-height:11.1px;color:#000;transform:scaleY(1.12);transform-origin:0 9px;">Проект:</div><div class="t" style="left:66.5px;top:185px;font-size:11.1px;line-height:11.1px;color:#000;transform:scaleY(1.12);transform-origin:0 9px;">Раздел:</div><div style="position:absolute;left:108px;top:94px;width:79px;height:19px;background:#fff;border-top:2px solid #808080;border-left:2px solid #808080;border-right:1px solid #f4f4f4;border-bottom:1px solid #f4f4f4;box-sizing:border-box"></div><div style="position:absolute;left:109px;top:112px;width:77px;height:1px;background:#1c2d9c"></div><div style="position:absolute;left:122px;top:95px;width:59px;height:14px;background:#0078d7"></div><div style="position:absolute;left:180px;top:95px;width:1px;height:14px;background:#000"></div><div class="t" style="left:123px;top:98px;font-size:11.1px;line-height:11.1px;color:#fff;transform:scaleY(1.12);transform-origin:0 9px;">27/06/2023</div><div style="position:absolute;left:188px;top:93px;width:18px;height:20px;background:#f0f0f0;border-top:1px solid #fff;border-left:1px solid #fff;border-right:1px solid #646464;border-bottom:1px solid #646464;box-sizing:border-box;box-shadow:inset -1px -1px 0 #a0a0a0"></div><div class="t" style="left:192px;top:99px;font-size:11.1px;line-height:11.1px;color:#000;transform:scaleY(1.12);transform-origin:0 9px;">...</div><div style="position:absolute;left:108px;top:137px;width:61px;height:17px;background:#fff;border-top:2px solid #808080;border-left:2px solid #808080;border-right:1px solid #f4f4f4;border-bottom:1px solid #f4f4f4;box-sizing:border-box"></div><div style="position:absolute;left:172px;top:137px;width:18px;height:20px;background:#f0f0f0;border-top:1px solid #fff;border-left:1px solid #fff;border-right:1px solid #646464;border-bottom:1px solid #646464;box-sizing:border-box;box-shadow:inset -1px -1px 0 #a0a0a0"></div><div class="t" style="left:176px;top:143px;font-size:11.1px;line-height:11.1px;color:#000;transform:scaleY(1.12);transform-origin:0 9px;">...</div><div style="position:absolute;left:193px;top:137px;width:255px;height:20px;border:1px solid #a6a6a6;border-right-color:#d8d8d8;border-bottom-color:#d8d8d8;box-sizing:border-box"></div><div style="position:absolute;left:108px;top:181px;width:61px;height:17px;background:#fff;border-top:2px solid #808080;border-left:2px solid #808080;border-right:1px solid #f4f4f4;border-bottom:1px solid #f4f4f4;box-sizing:border-box"></div><div style="position:absolute;left:172px;top:181px;width:18px;height:20px;background:#f0f0f0;border-top:1px solid #fff;border-left:1px solid #fff;border-right:1px solid #646464;border-bottom:1px solid #646464;box-sizing:border-box;box-shadow:inset -1px -1px 0 #a0a0a0"></div><div class="t" style="left:176px;top:187px;font-size:11.1px;line-height:11.1px;color:#000;transform:scaleY(1.12);transform-origin:0 9px;">...</div><div style="position:absolute;left:193px;top:181px;width:255px;height:20px;border:1px solid #a6a6a6;border-right-color:#d8d8d8;border-bottom-color:#d8d8d8;box-sizing:border-box"></div><div style="position:absolute;left:109px;top:229px;width:12px;height:12px;background:#fff;border-top:2px solid #808080;border-left:2px solid #808080;border-right:1px solid #e0e0e0;border-bottom:1px solid #e0e0e0;box-sizing:border-box"></div><div class="t" style="left:127.5px;top:231px;font-size:11.1px;line-height:11.1px;color:#000;transform:scaleY(1.12);transform-origin:0 9px;">Исключить служебные фирмы</div><div style="position:absolute;left:109px;top:252px;width:12px;height:12px;background:#fff;border-top:2px solid #808080;border-left:2px solid #808080;border-right:1px solid #e0e0e0;border-bottom:1px solid #e0e0e0;box-sizing:border-box"></div><div class="t" style="left:127.5px;top:253px;font-size:11.1px;line-height:11.1px;color:#000;transform:scaleY(1.12);transform-origin:0 9px;">Долги по нескольким фирмам</div></div><svg style="position:absolute;left:385px;top:753px;" width="12" height="14" viewBox="0 0 12 14"><path d="M8.5 2.5 Q2 1.5 2 6.5 Q2 10 7 10" stroke="#0c1c8c" stroke-width="3.2" fill="none"/><path d="M6 6 L11.5 10 L6 14Z" fill="#0c1c8c"/></svg><div class="t" style="left:406.4px;top:755px;font-size:11.1px;line-height:11.1px;color:#000;transform:scaleY(1.12);transform-origin:0 9px;"><u>О</u>бновить</div><svg style="position:absolute;left:617px;top:749px" width="20" height="20" viewBox="0 0 20 20" shape-rendering="crispEdges">
<defs><pattern id="chk3" width="2" height="2" patternUnits="userSpaceOnUse"><rect width="2" height="2" fill="#1aa8b8"/><rect width="1" height="1" fill="#30e8f0"/><rect x="1" y="1" width="1" height="1" fill="#30e8f0"/></pattern>
<linearGradient id="chk3g" x1="0" y1="0" x2="0" y2="1"><stop offset="0" stop-color="#000" stop-opacity="0"/><stop offset="1" stop-color="#000" stop-opacity="0.45"/></linearGradient></defs>
<rect x="0" y="0" width="20" height="20" fill="#0a0a0a"/>
<rect x="1" y="1" width="18" height="18" fill="url(#chk3)"/>
<rect x="1" y="1" width="18" height="18" fill="url(#chk3g)"/>
<path d="M5 19 L5.5 8 Q6 3 10 3 Q14 3 14.5 8 L16 16 L19 19Z" fill="#0e0e0e" shape-rendering="auto"/>
<path d="M1 19 L6 15 L14 15 L19 19Z" fill="#0e0e0e" shape-rendering="auto"/>
<ellipse cx="9.6" cy="9" rx="2.6" ry="3.4" fill="#f2dc9a" shape-rendering="auto"/>
<rect x="8" y="8" width="1" height="1" fill="#402010"/><rect x="11" y="8" width="1" height="1" fill="#402010"/>
<rect x="9" y="5" width="2" height="1" fill="#b08030"/>
<rect x="8" y="12" width="4" height="3" fill="#c84028"/>
<path d="M6 17 Q6.5 14.5 10 14.5 Q13.5 14.5 14 17 L12 18 L8 18Z" fill="#f2e2b0" shape-rendering="auto"/>
<rect x="8" y="16" width="1" height="1" fill="#8a5020"/><rect x="10" y="16" width="1" height="1" fill="#8a5020"/>
</svg><div class="t" style="left:643.2px;top:755px;font-size:11.1px;line-height:11.1px;color:#000;transform:scaleY(1.12);transform-origin:0 9px;"><u>Р</u>едактировать</div><svg style="position:absolute;left:747px;top:755px;" width="15" height="11" viewBox="0 0 15 11"><defs><linearGradient id="env" x1="0" y1="0" x2="0" y2="1"><stop offset="0" stop-color="#fafafa"/><stop offset="1" stop-color="#c8c8c8"/></linearGradient></defs><rect x="0.5" y="0.5" width="14" height="10" rx="1" fill="url(#env)" stroke="#303030"/><path d="M1 1 L7.5 6.5 L14 1" stroke="#303030" fill="none"/></svg><div class="t" style="left:770px;top:755px;font-size:11.1px;line-height:11.1px;color:#000;transform:scaleY(1.12);transform-origin:0 9px;"><u>П</u>исьмо разработчику</div><svg style="position:absolute;left:910px;top:752px;" width="17" height="16" viewBox="0 0 17 16"><path d="M1.5 1.5 L15.5 14.5 M15.5 1.5 L1.5 14.5" stroke="#b8283a" stroke-width="2.4"/></svg><div class="t" style="left:934.3px;top:755px;font-size:11.1px;line-height:11.1px;color:#000;transform:scaleY(1.12);transform-origin:0 9px;"><u>З</u>акрыть</div><div style="position:absolute;left:615px;top:383px;width:212px;height:142px;background:#f0f0f0;border:1px solid #3a8ad0;box-sizing:border-box"></div><div style="position:absolute;left:615px;top:383px;width:212px;height:26px;background:#0078d7"></div><div class="t" style="left:619.5px;top:390px;font-size:12px;line-height:12px;color:#fff;">Вопрос</div><svg style="position:absolute;left:806px;top:391px;" width="11" height="11" viewBox="0 0 11 11"><path d="M0.5 0.5 L10.5 10.5 M10.5 0.5 L0.5 10.5" stroke="#5ba3e6" stroke-width="1"/></svg><svg style="position:absolute;left:630px;top:434px;" width="23" height="23" viewBox="0 0 23 23"><defs><radialGradient id="qb" cx="0.4" cy="0.35" r="0.75"><stop offset="0" stop-color="#ffffff"/><stop offset="0.7" stop-color="#d8e6f4"/><stop offset="1" stop-color="#b8cce0"/></radialGradient></defs><path d="M11.5 1.5 C5.5 1.5 1.2 4.8 1.2 9.3 C1.2 13.2 4.5 16.2 9.5 16.8 L13.5 21.5 L13.2 16.6 C18.5 15.8 21.8 12.8 21.8 9.3 C21.8 4.8 17.5 1.5 11.5 1.5Z" fill="url(#qb)" stroke="#8696a8" stroke-width="0.9"/><path d="M8.6 6.2 Q8.6 3.6 11.6 3.6 Q14.6 3.6 14.6 6 Q14.6 7.8 12.8 8.8 Q11.7 9.5 11.7 11.2" stroke="#0c1a78" stroke-width="2.3" fill="none"/><circle cx="11.6" cy="13.4" r="1.5" fill="#0c1a78"/></svg><div class="t" style="left:664.8px;top:442px;font-size:11.1px;line-height:11.1px;color:#000;transform:scaleY(1.12);transform-origin:0 9px;">Включить режим отладки?</div><div style="position:absolute;left:643px;top:484px;width:75px;height:24px;background:#f0f0f0;border:1px solid #505050;box-sizing:border-box;box-shadow:inset 1px 1px 0 #fff,inset -1px -1px 0 #8a8a8a,inset -2px -2px 0 #b0b0b0"></div><div style="position:absolute;left:647px;top:488px;width:67px;height:16px;border:1px dotted #000;box-sizing:border-box"></div><div class="t" style="left:674px;top:491px;font-size:11.1px;line-height:11.1px;color:#000;transform:scaleY(1.12);transform-origin:0 9px;">Да</div><div style="position:absolute;left:726px;top:484px;width:75px;height:24px;background:#f0f0f0;border-top:1px solid #fff;border-left:1px solid #fff;border-right:1px solid #646464;border-bottom:1px solid #646464;box-sizing:border-box;box-shadow:inset -1px -1px 0 #a0a0a0"></div><div class="t" style="left:754.5px;top:491px;font-size:11.1px;line-height:11.1px;color:#000;transform:scaleY(1.12);transform-origin:0 9px;">Нет</div><div style="position:absolute;left:1262px;top:85px;width:200px;height:91px;background:#d7e4f2;border:1px solid #555b62;border-radius:5px 5px 0 0;box-sizing:border-box;overflow:hidden"></div><div style="position:absolute;left:1263px;top:86px;width:198px;height:30px;background:linear-gradient(#bccbdb,#dce8f4);border-radius:4px 4px 0 0"></div><div style="position:absolute;left:1263px;top:116px;width:1px;height:59px;background:rgba(255,255,255,0.7)"></div><div style="position:absolute;left:1460px;top:116px;width:1px;height:59px;background:rgba(255,255,255,0.7)"></div><div style="position:absolute;left:1263px;top:174px;width:198px;height:1px;background:rgba(255,255,255,0.7)"></div><div style="position:absolute;left:1266px;top:86px;width:192px;height:1px;background:rgba(255,255,255,0.5)"></div><div style="position:absolute;left:1270px;top:116px;width:184px;height:52px;background:#f0f0f0"></div><div class="t" style="left:1275px;top:100px;font-size:11.3px;line-height:11.3px;color:#8f9aa6;transform:scaleY(1.1);transform-origin:0 9px;">Сегодня</div><div style="position:absolute;left:2000px;top:95px;width:32px;height:18px;background:linear-gradient(#dde7f2,#c9d7e7);border:1px solid #8b9db3;border-radius:3px;box-sizing:border-box;box-shadow:inset 0 0 0 1px rgba(255,255,255,0.45)"></div><div style="position:absolute;left:2010px;top:103px;width:11px;height:5px;background:#fff;border:1px solid #3c4650;border-radius:1.5px;box-sizing:border-box"></div><div style="position:absolute;left:2034px;top:95px;width:32px;height:18px;background:linear-gradient(#dde7f2,#c9d7e7);border:1px solid #8b9db3;border-radius:3px;box-sizing:border-box;box-shadow:inset 0 0 0 1px rgba(255,255,255,0.45)"></div><div style="position:absolute;left:2044px;top:99px;width:11px;height:10px;background:#fff;border:1px solid #3c4650;border-radius:1.5px;box-sizing:border-box"></div><div style="position:absolute;left:2046px;top:102px;width:6px;height:4px;background:#8a96a2;border:1px solid #3c4650;box-sizing:border-box"></div><div style="position:absolute;left:2068px;top:95px;width:32px;height:18px;background:linear-gradient(#dde7f2,#c9d7e7);border:1px solid #8b9db3;border-radius:3px;box-sizing:border-box;box-shadow:inset 0 0 0 1px rgba(255,255,255,0.45)"></div><svg style="position:absolute;left:2078px;top:99px;" width="12" height="10" viewBox="0 0 12 10"><path d="M1.5 1.5 L10.5 8.5 M10.5 1.5 L1.5 8.5" stroke="#3c4650" stroke-width="3.6" stroke-linecap="round"/><path d="M1.5 1.5 L10.5 8.5 M10.5 1.5 L1.5 8.5" stroke="#fff" stroke-width="1.8" stroke-linecap="round"/></svg><div class="t" style="left:1277px;top:126px;font-size:11.1px;line-height:11.1px;color:#000;transform:scaleY(1.12);transform-origin:0 9px;">27/06/2023</div><div class="t" style="left:1345.4px;top:126px;font-size:11.1px;line-height:11.1px;color:#000;transform:scaleY(1.12);transform-origin:0 9px;">вт</div><div class="t" style="left:1374px;top:126px;font-size:11.1px;line-height:11.1px;color:#000;transform:scaleY(1.12);transform-origin:0 9px;">15:54:09</div><div style="position:absolute;left:1262px;top:177px;width:200px;height:444px;background:#d7e4f2;border:1px solid #555b62;border-radius:5px 5px 0 0;box-sizing:border-box;overflow:hidden"></div><div style="position:absolute;left:1263px;top:178px;width:198px;height:30px;background:linear-gradient(#bccbdb,#dce8f4);border-radius:4px 4px 0 0"></div><div style="position:absolute;left:1263px;top:208px;width:1px;height:412px;background:rgba(255,255,255,0.7)"></div><div style="position:absolute;left:1460px;top:208px;width:1px;height:412px;background:rgba(255,255,255,0.7)"></div><div style="position:absolute;left:1263px;top:619px;width:198px;height:1px;background:rgba(255,255,255,0.7)"></div><div style="position:absolute;left:1266px;top:178px;width:192px;height:1px;background:rgba(255,255,255,0.5)"></div><div style="position:absolute;left:1270px;top:208px;width:184px;height:405px;background:#f0f0f0"></div><div class="t" style="left:1274.5px;top:190px;font-size:11.6px;line-height:11.6px;color:#8f9aa6;transform:scaleY(1.1);transform-origin:0 10px;">Команды</div><div style="position:absolute;left:2000px;top:187px;width:32px;height:18px;background:linear-gradient(#dde7f2,#c9d7e7);border:1px solid #8b9db3;border-radius:3px;box-sizing:border-box;box-shadow:inset 0 0 0 1px rgba(255,255,255,0.45)"></div><div style="position:absolute;left:2010px;top:195px;width:11px;height:5px;background:#fff;border:1px solid #3c4650;border-radius:1.5px;box-sizing:border-box"></div><div style="position:absolute;left:2034px;top:187px;width:32px;height:18px;background:linear-gradient(#dde7f2,#c9d7e7);border:1px solid #8b9db3;border-radius:3px;box-sizing:border-box;box-shadow:inset 0 0 0 1px rgba(255,255,255,0.45)"></div><div style="position:absolute;left:2044px;top:191px;width:11px;height:10px;background:#fff;border:1px solid #3c4650;border-radius:1.5px;box-sizing:border-box"></div><div style="position:absolute;left:2046px;top:194px;width:6px;height:4px;background:#8a96a2;border:1px solid #3c4650;box-sizing:border-box"></div><div style="position:absolute;left:2068px;top:187px;width:32px;height:18px;background:linear-gradient(#dde7f2,#c9d7e7);border:1px solid #8b9db3;border-radius:3px;box-sizing:border-box;box-shadow:inset 0 0 0 1px rgba(255,255,255,0.45)"></div><svg style="position:absolute;left:2078px;top:191px;" width="12" height="10" viewBox="0 0 12 10"><path d="M1.5 1.5 L10.5 8.5 M10.5 1.5 L1.5 8.5" stroke="#3c4650" stroke-width="3.6" stroke-linecap="round"/><path d="M1.5 1.5 L10.5 8.5 M10.5 1.5 L1.5 8.5" stroke="#fff" stroke-width="1.8" stroke-linecap="round"/></svg><div style="position:absolute;left:1272px;top:233px;width:180px;height:378px;border-top:1px solid #fff;border-left:1px solid #fff;border-bottom:2px solid #6e6e6e;box-sizing:border-box"></div><div style="position:absolute;left:1274px;top:214px;width:55px;height:20px;background:#ececec;border-top:1px solid #fff;border-left:1px solid #fff;box-sizing:border-box"></div><div style="position:absolute;left:1329px;top:212px;width:63px;height:22px;background:#f0f0f0;border-top:1px solid #fff;border-left:1px solid #fff;border-right:2px solid #6e6e6e;box-sizing:border-box"></div><div style="position:absolute;left:1392px;top:214px;width:46px;height:20px;background:#f0f0f0;border-top:1px solid #fff;border-right:2px solid #6e6e6e;box-sizing:border-box"></div><div class="t" style="left:1278.6px;top:220px;font-size:11.1px;line-height:11.1px;color:#000;transform:scaleY(1.12);transform-origin:0 9px;">Справ-ки</div><div class="t" style="left:1335px;top:218px;font-size:11.1px;line-height:11.1px;color:#000;transform:scaleY(1.12);transform-origin:0 9px;">Докум-ты</div><div class="t" style="left:1394.4px;top:220px;font-size:11.1px;line-height:11.1px;color:#000;transform:scaleY(1.12);transform-origin:0 9px;">Отчеты</div><div style="position:absolute;left:1275px;top:240px;width:170px;height:338px;background:#fff;border-top:2px solid #6e6e6e;border-left:2px solid #6e6e6e;box-sizing:border-box"></div><div class="t" style="left:1279.6px;top:245px;font-size:11.1px;line-height:11.1px;color:#000;transform:scaleY(1.12);transform-origin:0 9px;">Р/Н</div><div class="t" style="left:1279.6px;top:263px;font-size:11.1px;line-height:11.1px;color:#000;transform:scaleY(1.12);transform-origin:0 9px;">Чеки</div><div class="t" style="left:1279.6px;top:281px;font-size:11.1px;line-height:11.1px;color:#000;transform:scaleY(1.12);transform-origin:0 9px;">ПКО</div><div class="t" style="left:1279.6px;top:299px;font-size:11.1px;line-height:11.1px;color:#000;transform:scaleY(1.12);transform-origin:0 9px;">РКО</div><svg style="position:absolute;left:1362px;top:585px;" width="17" height="17" viewBox="0 0 17 17"><path d="M2 2 L15 15 M15 2 L2 15" stroke="#b42a3c" stroke-width="2.4"/></svg><svg style="position:absolute;left:1389px;top:588px;" width="16" height="12" viewBox="0 0 16 12"><path d="M0 6 H6" stroke="#000" stroke-width="2"/><path d="M6 1 V11 M6 6 H9 M9 2.5 H14 V9.5 H9Z M14 1 V11" stroke="#000" stroke-width="1.6" fill="#ddd"/></svg><svg style="position:absolute;left:1415px;top:584px;" width="18" height="18" viewBox="0 0 18 18"><rect x="1.5" y="1.5" width="12" height="14" rx="1" fill="#f4ecd8" stroke="#9a8a6a"/><path d="M0 4H3 M0 7H3 M0 10H3 M0 13H3" stroke="#777"/><rect x="5" y="4" width="6" height="3" fill="#c050c0"/><rect x="5" y="7" width="6" height="3" fill="#f0a030"/><circle cx="13" cy="13" r="4.5" fill="#2aa84a" stroke="#fff" stroke-width="0.8"/><path d="M10.8 13 L12.5 14.8 L15.5 11.5" stroke="#fff" stroke-width="1.5" fill="none"/></svg><div style="position:absolute;left:1262px;top:622px;width:200px;height:296px;background:#d7e4f2;border:1px solid #555b62;border-radius:5px 5px 0 0;box-sizing:border-box;overflow:hidden"></div><div style="position:absolute;left:1263px;top:623px;width:198px;height:24px;background:linear-gradient(#bccbdb,#dce8f4);border-radius:4px 4px 0 0"></div><div style="position:absolute;left:1263px;top:647px;width:1px;height:270px;background:rgba(255,255,255,0.7)"></div><div style="position:absolute;left:1460px;top:647px;width:1px;height:270px;background:rgba(255,255,255,0.7)"></div><div style="position:absolute;left:1263px;top:916px;width:198px;height:1px;background:rgba(255,255,255,0.7)"></div><div style="position:absolute;left:1266px;top:623px;width:192px;height:1px;background:rgba(255,255,255,0.5)"></div><div style="position:absolute;left:1264px;top:647px;width:196px;height:269px;background:#f0f0f0"></div><div class="t" style="left:1270px;top:630px;font-size:11.6px;line-height:11.6px;color:#8f9aa6;transform:scaleY(1.1);transform-origin:0 10px;">Калькулятор</div><div style="position:absolute;left:2000px;top:632px;width:32px;height:18px;background:linear-gradient(#dde7f2,#c9d7e7);border:1px solid #8b9db3;border-radius:3px;box-sizing:border-box;box-shadow:inset 0 0 0 1px rgba(255,255,255,0.45)"></div><div style="position:absolute;left:2010px;top:640px;width:11px;height:5px;background:#fff;border:1px solid #3c4650;border-radius:1.5px;box-sizing:border-box"></div><div style="position:absolute;left:2034px;top:632px;width:32px;height:18px;background:linear-gradient(#dde7f2,#c9d7e7);border:1px solid #8b9db3;border-radius:3px;box-sizing:border-box;box-shadow:inset 0 0 0 1px rgba(255,255,255,0.45)"></div><div style="position:absolute;left:2044px;top:636px;width:11px;height:10px;background:#fff;border:1px solid #3c4650;border-radius:1.5px;box-sizing:border-box"></div><div style="position:absolute;left:2046px;top:639px;width:6px;height:4px;background:#8a96a2;border:1px solid #3c4650;box-sizing:border-box"></div><div style="position:absolute;left:2068px;top:632px;width:32px;height:18px;background:linear-gradient(#dde7f2,#c9d7e7);border:1px solid #8b9db3;border-radius:3px;box-sizing:border-box;box-shadow:inset 0 0 0 1px rgba(255,255,255,0.45)"></div><svg style="position:absolute;left:2078px;top:636px;" width="12" height="10" viewBox="0 0 12 10"><path d="M1.5 1.5 L10.5 8.5 M10.5 1.5 L1.5 8.5" stroke="#3c4650" stroke-width="3.6" stroke-linecap="round"/><path d="M1.5 1.5 L10.5 8.5 M10.5 1.5 L1.5 8.5" stroke="#fff" stroke-width="1.8" stroke-linecap="round"/></svg><div style="position:absolute;left:1270px;top:651px;width:156px;height:27px;background:#000;border-top:2px solid #808080;border-left:2px solid #808080;border-right:1px solid #fff;border-bottom:1px solid #fff;box-sizing:border-box"></div><div style="position:absolute;left:1426px;top:652px;width:13px;height:14px;background:#fff;border-right:1px solid #808080;border-bottom:1px solid #808080;box-sizing:border-box"></div><div style="position:absolute;left:1426px;top:666px;width:13px;height:15px;background:#fff;border-right:1px solid #808080;border-bottom:2px solid #808080;box-sizing:border-box"></div><svg style="position:absolute;left:1427px;top:653px;" width="11" height="27" viewBox="0 0 11 27"><path d="M1 2.5H10 M1 5.5H10 M1 8.5H10 M1 11.5H10 M1 16.5H10 M1 19.5H10 M1 22.5H10" stroke="#000" stroke-width="0.8" stroke-dasharray="1 0.6"/></svg><div class="t" style="left:1271.6px;top:682px;font-size:11.1px;line-height:11.1px;color:#000;transform:scaleY(1.12);transform-origin:0 9px;">Память: 0</div><div style="position:absolute;left:1273px;top:705px;width:161px;height:164px;background:#7f7f7f;border:1px solid #f0f060;border-radius:5px;box-sizing:border-box;box-shadow:0 0 0 1px #e8e8a0"></div><div style="position:absolute;left:1310px;top:717px;width:87px;height:117px;background:#fff"></div><div style="position:absolute;left:1311px;top:718px;width:85px;height:115px;border-top:1px solid #d4d4d4;border-left:1px solid #d4d4d4;box-sizing:border-box"></div><div style="position:absolute;left:1279px;top:722px;width:27px;height:25px;background:#f0f0f0;border-top:1px solid #fff;border-left:1px solid #fff;border-right:1px solid #646464;border-bottom:1px solid #646464;box-sizing:border-box;box-shadow:inset -1px -1px 0 #a0a0a0"></div><div class="t" style="left:1279px;top:722px;width:26px;height:24px;line-height:24px;text-align:center;font-size:11.1px;color:#000">MR</div><div style="position:absolute;left:1315px;top:722px;width:24px;height:25px;background:#f0f0f0;border-top:1px solid #fff;border-left:1px solid #fff;border-right:1px solid #646464;border-bottom:1px solid #646464;box-sizing:border-box;box-shadow:inset -1px -1px 0 #a0a0a0"></div><div class="t" style="left:1315px;top:722px;width:23px;height:24px;line-height:24px;text-align:center;font-size:11.1px;color:#000"><u>7</u></div><div style="position:absolute;left:1342px;top:722px;width:24px;height:25px;background:#f0f0f0;border-top:1px solid #fff;border-left:1px solid #fff;border-right:1px solid #646464;border-bottom:1px solid #646464;box-sizing:border-box;box-shadow:inset -1px -1px 0 #a0a0a0"></div><div class="t" style="left:1342px;top:722px;width:23px;height:24px;line-height:24px;text-align:center;font-size:11.1px;color:#000"><u>8</u></div><div style="position:absolute;left:1369px;top:722px;width:24px;height:25px;background:#f0f0f0;border-top:1px solid #fff;border-left:1px solid #fff;border-right:1px solid #646464;border-bottom:1px solid #646464;box-sizing:border-box;box-shadow:inset -1px -1px 0 #a0a0a0"></div><div class="t" style="left:1369px;top:722px;width:23px;height:24px;line-height:24px;text-align:center;font-size:11.1px;color:#000"><u>9</u></div><div style="position:absolute;left:1401px;top:722px;width:27px;height:25px;background:#f0f0f0;border-top:1px solid #fff;border-left:1px solid #fff;border-right:1px solid #646464;border-bottom:1px solid #646464;box-sizing:border-box;box-shadow:inset -1px -1px 0 #a0a0a0"></div><div class="t" style="left:1401px;top:722px;width:26px;height:24px;line-height:24px;text-align:center;font-size:11.1px;color:#000">%</div><div style="position:absolute;left:1279px;top:750px;width:27px;height:25px;background:#f0f0f0;border-top:1px solid #fff;border-left:1px solid #fff;border-right:1px solid #646464;border-bottom:1px solid #646464;box-sizing:border-box;box-shadow:inset -1px -1px 0 #a0a0a0"></div><div class="t" style="left:1279px;top:750px;width:26px;height:24px;line-height:24px;text-align:center;font-size:11.1px;color:#000">M</div><div style="position:absolute;left:1315px;top:750px;width:24px;height:25px;background:#f0f0f0;border-top:1px solid #fff;border-left:1px solid #fff;border-right:1px solid #646464;border-bottom:1px solid #646464;box-sizing:border-box;box-shadow:inset -1px -1px 0 #a0a0a0"></div><div class="t" style="left:1315px;top:750px;width:23px;height:24px;line-height:24px;text-align:center;font-size:11.1px;color:#000"><u>4</u></div><div style="position:absolute;left:1342px;top:750px;width:24px;height:25px;background:#f0f0f0;border-top:1px solid #fff;border-left:1px solid #fff;border-right:1px solid #646464;border-bottom:1px solid #646464;box-sizing:border-box;box-shadow:inset -1px -1px 0 #a0a0a0"></div><div class="t" style="left:1342px;top:750px;width:23px;height:24px;line-height:24px;text-align:center;font-size:11.1px;color:#000"><u>5</u></div><div style="position:absolute;left:1369px;top:750px;width:24px;height:25px;background:#f0f0f0;border-top:1px solid #fff;border-left:1px solid #fff;border-right:1px solid #646464;border-bottom:1px solid #646464;box-sizing:border-box;box-shadow:inset -1px -1px 0 #a0a0a0"></div><div class="t" style="left:1369px;top:750px;width:23px;height:24px;line-height:24px;text-align:center;font-size:11.1px;color:#000"><u>6</u></div><div style="position:absolute;left:1401px;top:750px;width:27px;height:25px;background:#f0f0f0;border-top:1px solid #fff;border-left:1px solid #fff;border-right:1px solid #646464;border-bottom:1px solid #646464;box-sizing:border-box;box-shadow:inset -1px -1px 0 #a0a0a0"></div><div class="t" style="left:1401px;top:750px;width:26px;height:24px;line-height:24px;text-align:center;font-size:11.1px;color:#000">/</div><div style="position:absolute;left:1279px;top:778px;width:27px;height:25px;background:#f0f0f0;border-top:1px solid #fff;border-left:1px solid #fff;border-right:1px solid #646464;border-bottom:1px solid #646464;box-sizing:border-box;box-shadow:inset -1px -1px 0 #a0a0a0"></div><div class="t" style="left:1279px;top:778px;width:26px;height:24px;line-height:24px;text-align:center;font-size:11.1px;color:#000">M+</div><div style="position:absolute;left:1315px;top:778px;width:24px;height:25px;background:#f0f0f0;border-top:1px solid #fff;border-left:1px solid #fff;border-right:1px solid #646464;border-bottom:1px solid #646464;box-sizing:border-box;box-shadow:inset -1px -1px 0 #a0a0a0"></div><div class="t" style="left:1315px;top:778px;width:23px;height:24px;line-height:24px;text-align:center;font-size:11.1px;color:#000"><u>1</u></div><div style="position:absolute;left:1342px;top:778px;width:24px;height:25px;background:#f0f0f0;border-top:1px solid #fff;border-left:1px solid #fff;border-right:1px solid #646464;border-bottom:1px solid #646464;box-sizing:border-box;box-shadow:inset -1px -1px 0 #a0a0a0"></div><div class="t" style="left:1342px;top:778px;width:23px;height:24px;line-height:24px;text-align:center;font-size:11.1px;color:#000"><u>2</u></div><div style="position:absolute;left:1369px;top:778px;width:24px;height:25px;background:#f0f0f0;border-top:1px solid #fff;border-left:1px solid #fff;border-right:1px solid #646464;border-bottom:1px solid #646464;box-sizing:border-box;box-shadow:inset -1px -1px 0 #a0a0a0"></div><div class="t" style="left:1369px;top:778px;width:23px;height:24px;line-height:24px;text-align:center;font-size:11.1px;color:#000"><u>3</u></div><div style="position:absolute;left:1401px;top:778px;width:27px;height:25px;background:#f0f0f0;border-top:1px solid #fff;border-left:1px solid #fff;border-right:1px solid #646464;border-bottom:1px solid #646464;box-sizing:border-box;box-shadow:inset -1px -1px 0 #a0a0a0"></div><div class="t" style="left:1401px;top:778px;width:26px;height:24px;line-height:24px;text-align:center;font-size:11.1px;color:#000">x</div><div style="position:absolute;left:1279px;top:806px;width:27px;height:25px;background:#f0f0f0;border-top:1px solid #fff;border-left:1px solid #fff;border-right:1px solid #646464;border-bottom:1px solid #646464;box-sizing:border-box;box-shadow:inset -1px -1px 0 #a0a0a0"></div><div class="t" style="left:1279px;top:806px;width:26px;height:24px;line-height:24px;text-align:center;font-size:11.1px;color:#000">M-</div><div style="position:absolute;left:1315px;top:806px;width:24px;height:25px;background:#f0f0f0;border-top:1px solid #fff;border-left:1px solid #fff;border-right:1px solid #646464;border-bottom:1px solid #646464;box-sizing:border-box;box-shadow:inset -1px -1px 0 #a0a0a0"></div><div class="t" style="left:1315px;top:806px;width:23px;height:24px;line-height:24px;text-align:center;font-size:11.1px;color:#000">+/-</div><div style="position:absolute;left:1342px;top:806px;width:24px;height:25px;background:#f0f0f0;border-top:1px solid #fff;border-left:1px solid #fff;border-right:1px solid #646464;border-bottom:1px solid #646464;box-sizing:border-box;box-shadow:inset -1px -1px 0 #a0a0a0"></div><div class="t" style="left:1342px;top:806px;width:23px;height:24px;line-height:24px;text-align:center;font-size:11.1px;color:#000">.</div><div style="position:absolute;left:1369px;top:806px;width:24px;height:25px;background:#f0f0f0;border-top:1px solid #fff;border-left:1px solid #fff;border-right:1px solid #646464;border-bottom:1px solid #646464;box-sizing:border-box;box-shadow:inset -1px -1px 0 #a0a0a0"></div><div class="t" style="left:1369px;top:806px;width:23px;height:24px;line-height:24px;text-align:center;font-size:11.1px;color:#000"><u>0</u></div><div style="position:absolute;left:1401px;top:806px;width:27px;height:25px;background:#f0f0f0;border-top:1px solid #fff;border-left:1px solid #fff;border-right:1px solid #646464;border-bottom:1px solid #646464;box-sizing:border-box;box-shadow:inset -1px -1px 0 #a0a0a0"></div><div class="t" style="left:1401px;top:806px;width:26px;height:24px;line-height:24px;text-align:center;font-size:11.1px;color:#000">-</div><div style="position:absolute;left:1279px;top:836px;width:27px;height:25px;background:#f0f0f0;border-top:1px solid #fff;border-left:1px solid #fff;border-right:1px solid #646464;border-bottom:1px solid #646464;box-sizing:border-box;box-shadow:inset -1px -1px 0 #a0a0a0"></div><div class="t" style="left:1279px;top:836px;width:26px;height:24px;line-height:24px;text-align:center;font-size:11.1px;color:#000">CE</div><div style="position:absolute;left:1315px;top:836px;width:24px;height:25px;background:#f0f0f0;border-top:1px solid #fff;border-left:1px solid #fff;border-right:1px solid #646464;border-bottom:1px solid #646464;box-sizing:border-box;box-shadow:inset -1px -1px 0 #a0a0a0"></div><div class="t" style="left:1315px;top:836px;width:23px;height:24px;line-height:24px;text-align:center;font-size:11.1px;color:#000">1/x</div><div style="position:absolute;left:1342px;top:836px;width:24px;height:25px;background:#f0f0f0;border-top:1px solid #fff;border-left:1px solid #fff;border-right:1px solid #646464;border-bottom:1px solid #646464;box-sizing:border-box;box-shadow:inset -1px -1px 0 #a0a0a0"></div><div class="t" style="left:1342px;top:836px;width:23px;height:24px;line-height:24px;text-align:center;font-size:11.1px;color:#000">&lt;--</div><div style="position:absolute;left:1369px;top:836px;width:24px;height:25px;background:#f0f0f0;border-top:1px solid #fff;border-left:1px solid #fff;border-right:1px solid #646464;border-bottom:1px solid #646464;box-sizing:border-box;box-shadow:inset -1px -1px 0 #a0a0a0"></div><div class="t" style="left:1369px;top:836px;width:23px;height:24px;line-height:24px;text-align:center;font-size:11.1px;color:#000">=</div><div style="position:absolute;left:1402px;top:836px;width:27px;height:25px;background:#f0f0f0;border-top:1px solid #fff;border-left:1px solid #fff;border-right:1px solid #646464;border-bottom:1px solid #646464;box-sizing:border-box;box-shadow:inset -1px -1px 0 #a0a0a0"></div><div class="t" style="left:1402px;top:836px;width:26px;height:24px;line-height:24px;text-align:center;font-size:11.1px;color:#000">+</div><div style="position:absolute;left:1280px;top:876px;width:34px;height:35px;background:#f0f0f0;border-top:1px solid #fff;border-left:1px solid #fff;border-right:1px solid #646464;border-bottom:1px solid #646464;box-sizing:border-box;box-shadow:inset -1px -1px 0 #a0a0a0"></div><div style="position:absolute;left:1316px;top:876px;width:34px;height:35px;background:#f0f0f0;border-top:1px solid #fff;border-left:1px solid #fff;border-right:1px solid #646464;border-bottom:1px solid #646464;box-sizing:border-box;box-shadow:inset -1px -1px 0 #a0a0a0"></div><div style="position:absolute;left:1352px;top:876px;width:34px;height:35px;background:#f0f0f0;border-top:1px solid #fff;border-left:1px solid #fff;border-right:1px solid #646464;border-bottom:1px solid #646464;box-sizing:border-box;box-shadow:inset -1px -1px 0 #a0a0a0"></div><svg style="position:absolute;left:1288px;top:885px;" width="16" height="15" viewBox="0 0 16 15"><rect x="0.5" y="0.5" width="9" height="12" fill="#fff" stroke="#000"/><rect x="6.5" y="3.5" width="9" height="11" fill="#fff" stroke="#000"/><path d="M2 3H8 M8 6H14 M8 10H14" stroke="#c02020"/><path d="M2 5.5H5 M2 8H5 M2 10.5H5 M8 8H14 M8 12H14" stroke="#102080"/></svg><svg style="position:absolute;left:1323px;top:884px;" width="19" height="17" viewBox="0 0 19 17"><rect x="1" y="2" width="11" height="13" rx="1" fill="#2a8a8a" stroke="#103050"/><path d="M1 4 L12 15 M4 2 L12 10 M1 9 L7 15" stroke="#80c0c0" stroke-width="0.8"/><rect x="4" y="0.5" width="5" height="3" fill="#f0d060" stroke="#555"/><rect x="8.5" y="8.5" width="10" height="8" fill="#fff" stroke="#102080"/><path d="M10 11H17 M10 13.5H17" stroke="#102080"/></svg><svg style="position:absolute;left:1360px;top:884px;" width="16" height="18" viewBox="0 0 16 18"><defs><linearGradient id="sg" x1="0" y1="0" x2="1" y2="1"><stop offset="0" stop-color="#9cc8f4"/><stop offset="1" stop-color="#e0f0ff"/></linearGradient></defs><rect x="0.5" y="0.5" width="15" height="17" rx="1.5" fill="url(#sg)" stroke="#7aaadc"/><path d="M11.5 5.5 V4 H4.5 L8.5 9 L4.5 14 H11.5 V12.5" stroke="#2a3a7a" stroke-width="1.4" fill="none"/></svg><div style="position:absolute;left:0px;top:0px;width:1441px;height:1px;background:#2f5470"></div><div style="position:absolute;left:0px;top:940px;width:1441px;height:1px;background:#2c4f78"></div><div style="position:absolute;left:0px;top:0px;width:1px;height:941px;background:#2f6585"></div><div style="position:absolute;left:1440px;top:0px;width:1px;height:941px;background:#2c4f78"></div>
</body></html>
